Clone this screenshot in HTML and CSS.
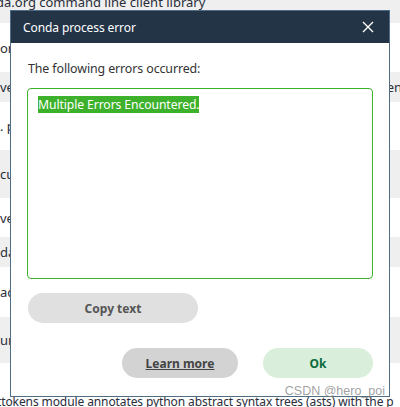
FILE: index.html
```html
<!DOCTYPE html>
<html>
<head>
<meta charset="utf-8">
<link rel="stylesheet" href="styles.css">
</head>
<body>
<div class="page">
  <div class="rows">
    <div class="row gray h23"><span class="txt top">da.org command line client library</span></div>
    <div class="row h49"><span class="txt">or</span></div>
    <div class="row gray h30"><span class="txt">ve</span><span class="txt right">en</span></div>
    <div class="row h48"><span class="txt">. p</span></div>
    <div class="row gray h48"><span class="txt">cu</span></div>
    <div class="row h39"><span class="txt">ve</span></div>
    <div class="row gray h30"><span class="txt">da</span></div>
    <div class="row h50"><span class="txt">ac</span></div>
    <div class="row gray h46"><span class="txt">un</span></div>
    <div class="row h44 last"><span class="txt bottom">ttokens module annotates python abstract syntax trees (asts) with the p</span></div>
  </div>

  <div class="dialog">
    <div class="titlebar">
      <span class="title">Conda process error</span>
      <svg class="close" width="12" height="12" viewBox="0 0 12 12">
        <path d="M1 1 L11 11 M11 1 L1 11" stroke="#ffffff" stroke-width="1.4" fill="none"/>
      </svg>
    </div>
    <div class="body">
      <div class="label">The following errors occurred:</div>
      <div class="errorbox"><span class="sel">Multiple Errors Encountered.</span></div>
      <button class="btn copy">Copy text</button>
      <div class="actions">
        <button class="btn learn">Learn more</button>
        <button class="btn ok">Ok</button>
      </div>
    </div>
  </div>

  <div class="watermark">CSDN @hero_poi</div>
</div>
</body>
</html>
```

FILE: styles.css
```css
html, body {
  margin: 0;
  padding: 0;
}
body {
  width: 400px;
  height: 407px;
  overflow: hidden;
  background: #ffffff;
  font-family: "Noto Sans", "DejaVu Sans", sans-serif;
}
.page {
  position: relative;
  width: 400px;
  height: 407px;
  overflow: hidden;
}
.rows {
  display: flex;
  flex-direction: column;
}
.row {
  position: relative;
  display: flex;
  align-items: center;
  justify-content: space-between;
  background: #ffffff;
  color: #2a2d3a;
  font-size: 13px;
  white-space: nowrap;
  overflow: hidden;
}
.row.gray { background: #efefef; }
.h23 { height: 23px; align-items: flex-start; }
.h30 { height: 30px; }
.h39 { height: 39px; }
.h44 { height: 44px; }
.h46 { height: 46px; }
.h48 { height: 48px; }
.h49 { height: 49px; }
.h50 { height: 50px; }
.row.last { align-items: flex-start; }
.txt { line-height: 16px; }
.txt.top { margin-top: -6px; margin-left: -4px; }
.txt.bottom { margin-left: -3px; margin-top: 31px; font-size: 12px; letter-spacing: -0.1px; }
.txt.right { margin-right: -2px; }

.dialog {
  position: absolute;
  left: 10px;
  top: 10px;
  width: 380px;
  height: 387px;
  box-sizing: border-box;
  border: 1px solid #4f6e86;
  background: #ffffff;
  display: flex;
  flex-direction: column;
}
.titlebar {
  height: 32px;
  background: #243447;
  display: flex;
  align-items: center;
  justify-content: space-between;
  padding: 0 15px 0 12px;
  flex-shrink: 0;
}
.title {
  color: #ffffff;
  font-size: 12px;
  letter-spacing: -0.1px;
}
.close { display: block; }
.body {
  display: flex;
  flex-direction: column;
  padding: 17px 16px 18px 16px;
  flex: 1;
}
.label {
  font-size: 12.4px;
  color: #333333;
  line-height: 18px;
  padding-left: 1px;
  letter-spacing: -0.1px;
}
.errorbox {
  margin-top: 10px;
  height: 191px;
  box-sizing: border-box;
  border: 1px solid #3db12c;
  border-radius: 4px;
  padding: 8px 10px;
  font-size: 12.2px;
  line-height: 16px;
  letter-spacing: -0.1px;
}
.sel {
  background: #3db12c;
  color: #ffffff;
}
.btn {
  border: none;
  border-radius: 15px;
  height: 30px;
  font-family: "Noto Sans", "DejaVu Sans", sans-serif;
  font-weight: bold;
  font-size: 12px;
  padding: 0;
}
.copy {
  margin-top: 14px;
  margin-left: 1px;
  width: 170px;
  background: #e0e0e0;
  color: #555555;
}
.actions {
  margin-top: auto;
  display: flex;
  justify-content: flex-end;
  gap: 25px;
}
.learn {
  width: 116px;
  background: #d3d3d3;
  color: #444444;
  text-decoration: underline;
}
.ok {
  width: 110px;
  background: #d9eedb;
  color: #0c6b3b;
}
.watermark {
  position: absolute;
  right: 15px;
  bottom: 9px;
  font-family: "Liberation Sans", Arial, sans-serif;
  font-size: 12.5px;
  color: rgba(130, 130, 130, 0.75);
}
```
